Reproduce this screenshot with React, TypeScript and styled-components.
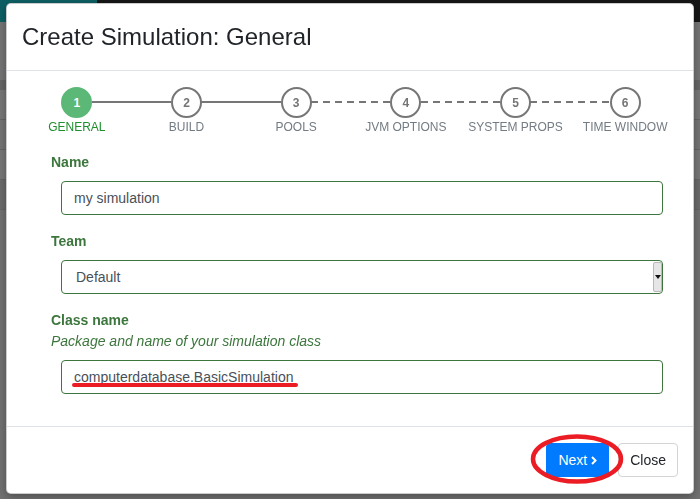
import React from 'react';
import styled, { createGlobalStyle } from 'styled-components';

const GlobalStyle = createGlobalStyle`
  html, body {
    margin: 0;
    padding: 0;
    height: 100%;
    overflow: hidden;
  }
  body {
    background: #707070;
    font-family: 'Liberation Sans', Arial, sans-serif;
  }
`;

/* dimmed app behind the modal */
const Page = styled.div`
  height: 499px;
  display: flex;
  flex-direction: column;
  background: #717171;
`;

const TopBar = styled.div`
  height: 22px;
  display: flex;
  background: #161616;
`;

const Brand = styled.div`
  width: 97px;
  background: #0d5f63;
`;

const SubBar = styled.div`
  height: 58px;
  background: #747474;
  border-bottom: 10px solid #666;
`;

const BgRow = styled.div<{ $tone?: string }>`
  height: 29px;
  background: ${(p) => p.$tone || '#777'};
  border-bottom: 1px solid #656565;
`;

const Overlay = styled.div`
  position: fixed;
  inset: 0;
  padding: 3px 6px;
`;

const Modal = styled.div`
  width: 688px;
  background: #fff;
  border: 1px solid rgba(0, 0, 0, 0.2);
  border-radius: 5px;
  box-sizing: border-box;
  box-shadow: 0 3px 9px rgba(0, 0, 0, 0.3);
`;

const Header = styled.div`
  padding: 15px 15px;
  border-bottom: 1px solid #dee2e6;
`;

const Title = styled.h4`
  margin: 0;
  font-size: 24px;
  line-height: 36px;
  font-weight: 400;
  color: #212529;
`;

const Body = styled.div`
  padding: 16px 13px 16px 15px;
`;

const Stepper = styled.div`
  display: grid;
  grid-template-columns: repeat(6, 1fr);
  margin-bottom: 17px;
`;

const Step = styled.div`
  position: relative;
  display: flex;
  flex-direction: column;
  align-items: center;
`;

const Circle = styled.div<{ $active?: boolean }>`
  position: relative;
  z-index: 1;
  width: 31px;
  height: 31px;
  box-sizing: border-box;
  border-radius: 50%;
  border: 2px solid ${(p) => (p.$active ? '#5bb877' : '#767676')};
  background: ${(p) => (p.$active ? '#5bb877' : '#fff')};
  color: ${(p) => (p.$active ? '#fff' : '#757575')};
  font-size: 12px;
  font-weight: 700;
  display: flex;
  align-items: center;
  justify-content: center;
`;

const Connector = styled.div<{ $dashed?: boolean }>`
  position: absolute;
  top: 14px;
  left: calc(50% + 15px);
  width: calc(100% - 30px);
  height: 2px;
  background: ${(p) =>
    p.$dashed
      ? 'repeating-linear-gradient(to right, #767676 0 7px, transparent 7px 12px)'
      : '#767676'};
`;

const StepLabel = styled.div<{ $active?: boolean }>`
  margin-top: 1px;
  font-size: 12px;
  line-height: 16px;
  text-transform: uppercase;
  white-space: nowrap;
  color: ${(p) => (p.$active ? '#1f8f2f' : '#737b83')};
`;

const Form = styled.div`
  padding: 0 17px 0 29px;
`;

const Group = styled.div`
  margin-bottom: 16px;
`;

const Label = styled.div`
  font-size: 14px;
  line-height: 20px;
  font-weight: 700;
  color: #3c763d;
  margin-bottom: 9px;
`;

const Help = styled.div`
  margin: -8px 0 9px;
  font-size: 14px;
  line-height: 20px;
  font-style: italic;
  color: #3c763d;
`;

const Field = styled.div`
  position: relative;
  margin-left: 10px;
  height: 34px;
  box-sizing: border-box;
  border: 1px solid #3c763d;
  border-radius: 4px;
  display: flex;
  align-items: center;
  padding-left: 12px;
  font-size: 14px;
  color: #495057;
  background: #fff;
`;

const SelectText = styled.span`
  flex: 1;
  padding-left: 2px;
`;

const SelectArrow = styled.div`
  align-self: stretch;
  width: 7px;
  margin: 1px 0;
  background: #e6e6e6;
  border: 1px solid #b9b9b9;
  border-radius: 2px;
  display: flex;
  align-items: center;
  justify-content: center;
`;

const Triangle = styled.div`
  width: 0;
  height: 0;
  border-left: 3px solid transparent;
  border-right: 3px solid transparent;
  border-top: 4px solid #111;
`;

const Underline = styled.div`
  position: absolute;
  left: 10px;
  top: 22px;
  width: 226px;
  height: 4px;
  border-radius: 2px;
  background: #ec1c24;
`;

const Footer = styled.div`
  display: flex;
  justify-content: flex-end;
  align-items: center;
  gap: 9px;
  padding: 16px 15px;
  border-top: 1px solid #dee2e6;
`;

const NextWrap = styled.div`
  position: relative;
`;

const Button = styled.button<{ $primary?: boolean }>`
  height: 34px;
  padding: 0 11px;
  font-family: inherit;
  font-size: 14px;
  border-radius: 4px;
  display: flex;
  align-items: center;
  gap: 4px;
  border: 1px solid ${(p) => (p.$primary ? '#007bff' : '#d4d4d4')};
  background: ${(p) => (p.$primary ? '#007bff' : '#fff')};
  color: ${(p) => (p.$primary ? '#fff' : '#212529')};
`;

const Ellipse = styled.svg`
  position: absolute;
  left: -16px;
  top: -9px;
  z-index: 2;
  overflow: visible;
  pointer-events: none;
`;

const steps = ['General', 'Build', 'Pools', 'JVM Options', 'System Props', 'Time Window'];

export default function App() {
  return (
    <>
      <GlobalStyle />
      <Page>
        <TopBar>
          <Brand />
        </TopBar>
        <SubBar />
        <BgRow />
        <BgRow $tone="#747474" />
        <BgRow />
        <BgRow $tone="#6a6a6a" />
      </Page>
      <Overlay>
        <Modal>
          <Header>
            <Title>Create Simulation: General</Title>
          </Header>
          <Body>
            <Stepper>
              {steps.map((s, i) => (
                <Step key={s}>
                  {i < steps.length - 1 && <Connector $dashed={i >= 2} />}
                  <Circle $active={i === 0}>{i + 1}</Circle>
                  <StepLabel $active={i === 0}>{s}</StepLabel>
                </Step>
              ))}
            </Stepper>
            <Form>
              <Group>
                <Label>Name</Label>
                <Field>my simulation</Field>
              </Group>
              <Group>
                <Label>Team</Label>
                <Field>
                  <SelectText>Default</SelectText>
                  <SelectArrow>
                    <Triangle />
                  </SelectArrow>
                </Field>
              </Group>
              <Group>
                <Label>Class name</Label>
                <Help>Package and name of your simulation class</Help>
                <Field>
                  computerdatabase.BasicSimulation
                  <Underline />
                </Field>
              </Group>
            </Form>
          </Body>
          <Footer>
            <NextWrap>
              <Button $primary>
                Next
                <svg width="6" height="9" viewBox="0 0 6 9">
                  <polyline points="1,1 4.5,4.5 1,8" fill="none" stroke="#fff" strokeWidth="2" />
                </svg>
              </Button>
              <Ellipse width="94" height="50" viewBox="0 0 94 50">
                <ellipse cx="47" cy="25" rx="44" ry="22.5" fill="none" stroke="#ec1c24" strokeWidth="4.5" />
              </Ellipse>
            </NextWrap>
            <Button>Close</Button>
          </Footer>
        </Modal>
      </Overlay>
    </>
  );
}
